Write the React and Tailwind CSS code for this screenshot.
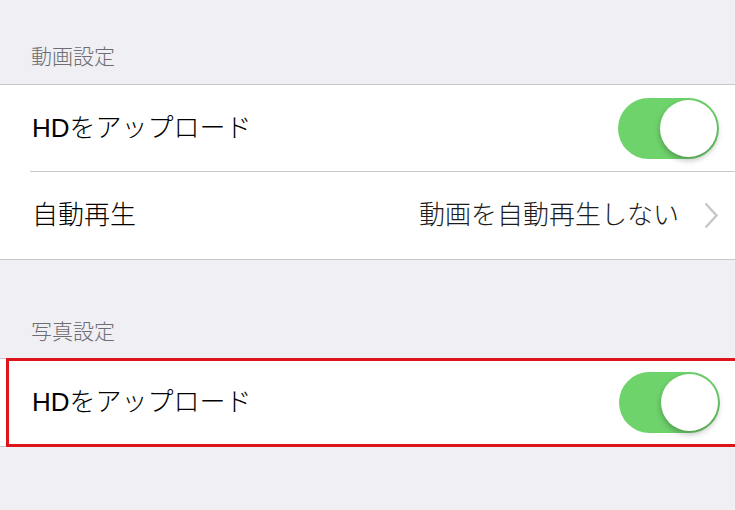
import React from 'react';

const font = { fontFamily: '"Liberation Sans", "Noto Sans CJK JP", sans-serif' };

const Toggle = () => (
  <div className="relative h-[61px] w-[101px] rounded-full bg-[#6fd36c]">
    <div className="absolute right-[2px] top-[2px] h-[57px] w-[57px] rounded-full bg-white shadow-[0_3px_6px_rgba(0,0,0,0.28)]" />
  </div>
);

const SectionHeader = ({ children, className }) => (
  <div className={`px-[31px] text-[21px] font-light leading-[26px] text-[#6d6d72] ${className}`}>{children}</div>
);

const App = () => {
  return (
    <div className="min-h-[510px] w-[735px] overflow-hidden bg-[#efeff4]" style={font}>
      {/* 動画設定 */}
      <SectionHeader className="pt-[44px] pb-[14px]">動画設定</SectionHeader>
      <div className="border-y border-[#c8c7cc] bg-white">
        <div className="flex h-[86px] items-center justify-between pl-[32px] pr-[16px]">
          <span className="text-[26px] font-light text-black">HDをアップロード</span>
          <Toggle />
        </div>
        <div className="ml-[30px] h-px bg-[#c8c7cc]" />
        <div className="flex h-[87px] items-center justify-between pl-[32px] pr-[17px]">
          <span className="text-[26px] font-light text-black">自動再生</span>
          <div className="flex items-center gap-[25px]">
            <span className="text-[26px] font-light text-[#1c1c1c]">動画を自動再生しない</span>
            <svg width="14" height="27" viewBox="0 0 14 27" fill="none">
              <path d="M1.5 1.5 L12.5 13.5 L1.5 25.5" stroke="#c7c7cc" strokeWidth="2.5" />
            </svg>
          </div>
        </div>
      </div>

      {/* 写真設定 */}
      <SectionHeader className="pt-[59px] pb-[13px]">写真設定</SectionHeader>
      <div className="relative border-y border-[#c8c7cc] bg-white">
        <div className="flex h-[87px] items-center justify-between pl-[32px] pr-[15px]">
          <span className="text-[26px] font-light text-black">HDをアップロード</span>
          <Toggle />
        </div>
        <div className="pointer-events-none absolute -bottom-px -right-[10px] left-[6px] -top-px border-[3px] border-[#dd1419]" />
      </div>
    </div>
  );
};

export default App;
